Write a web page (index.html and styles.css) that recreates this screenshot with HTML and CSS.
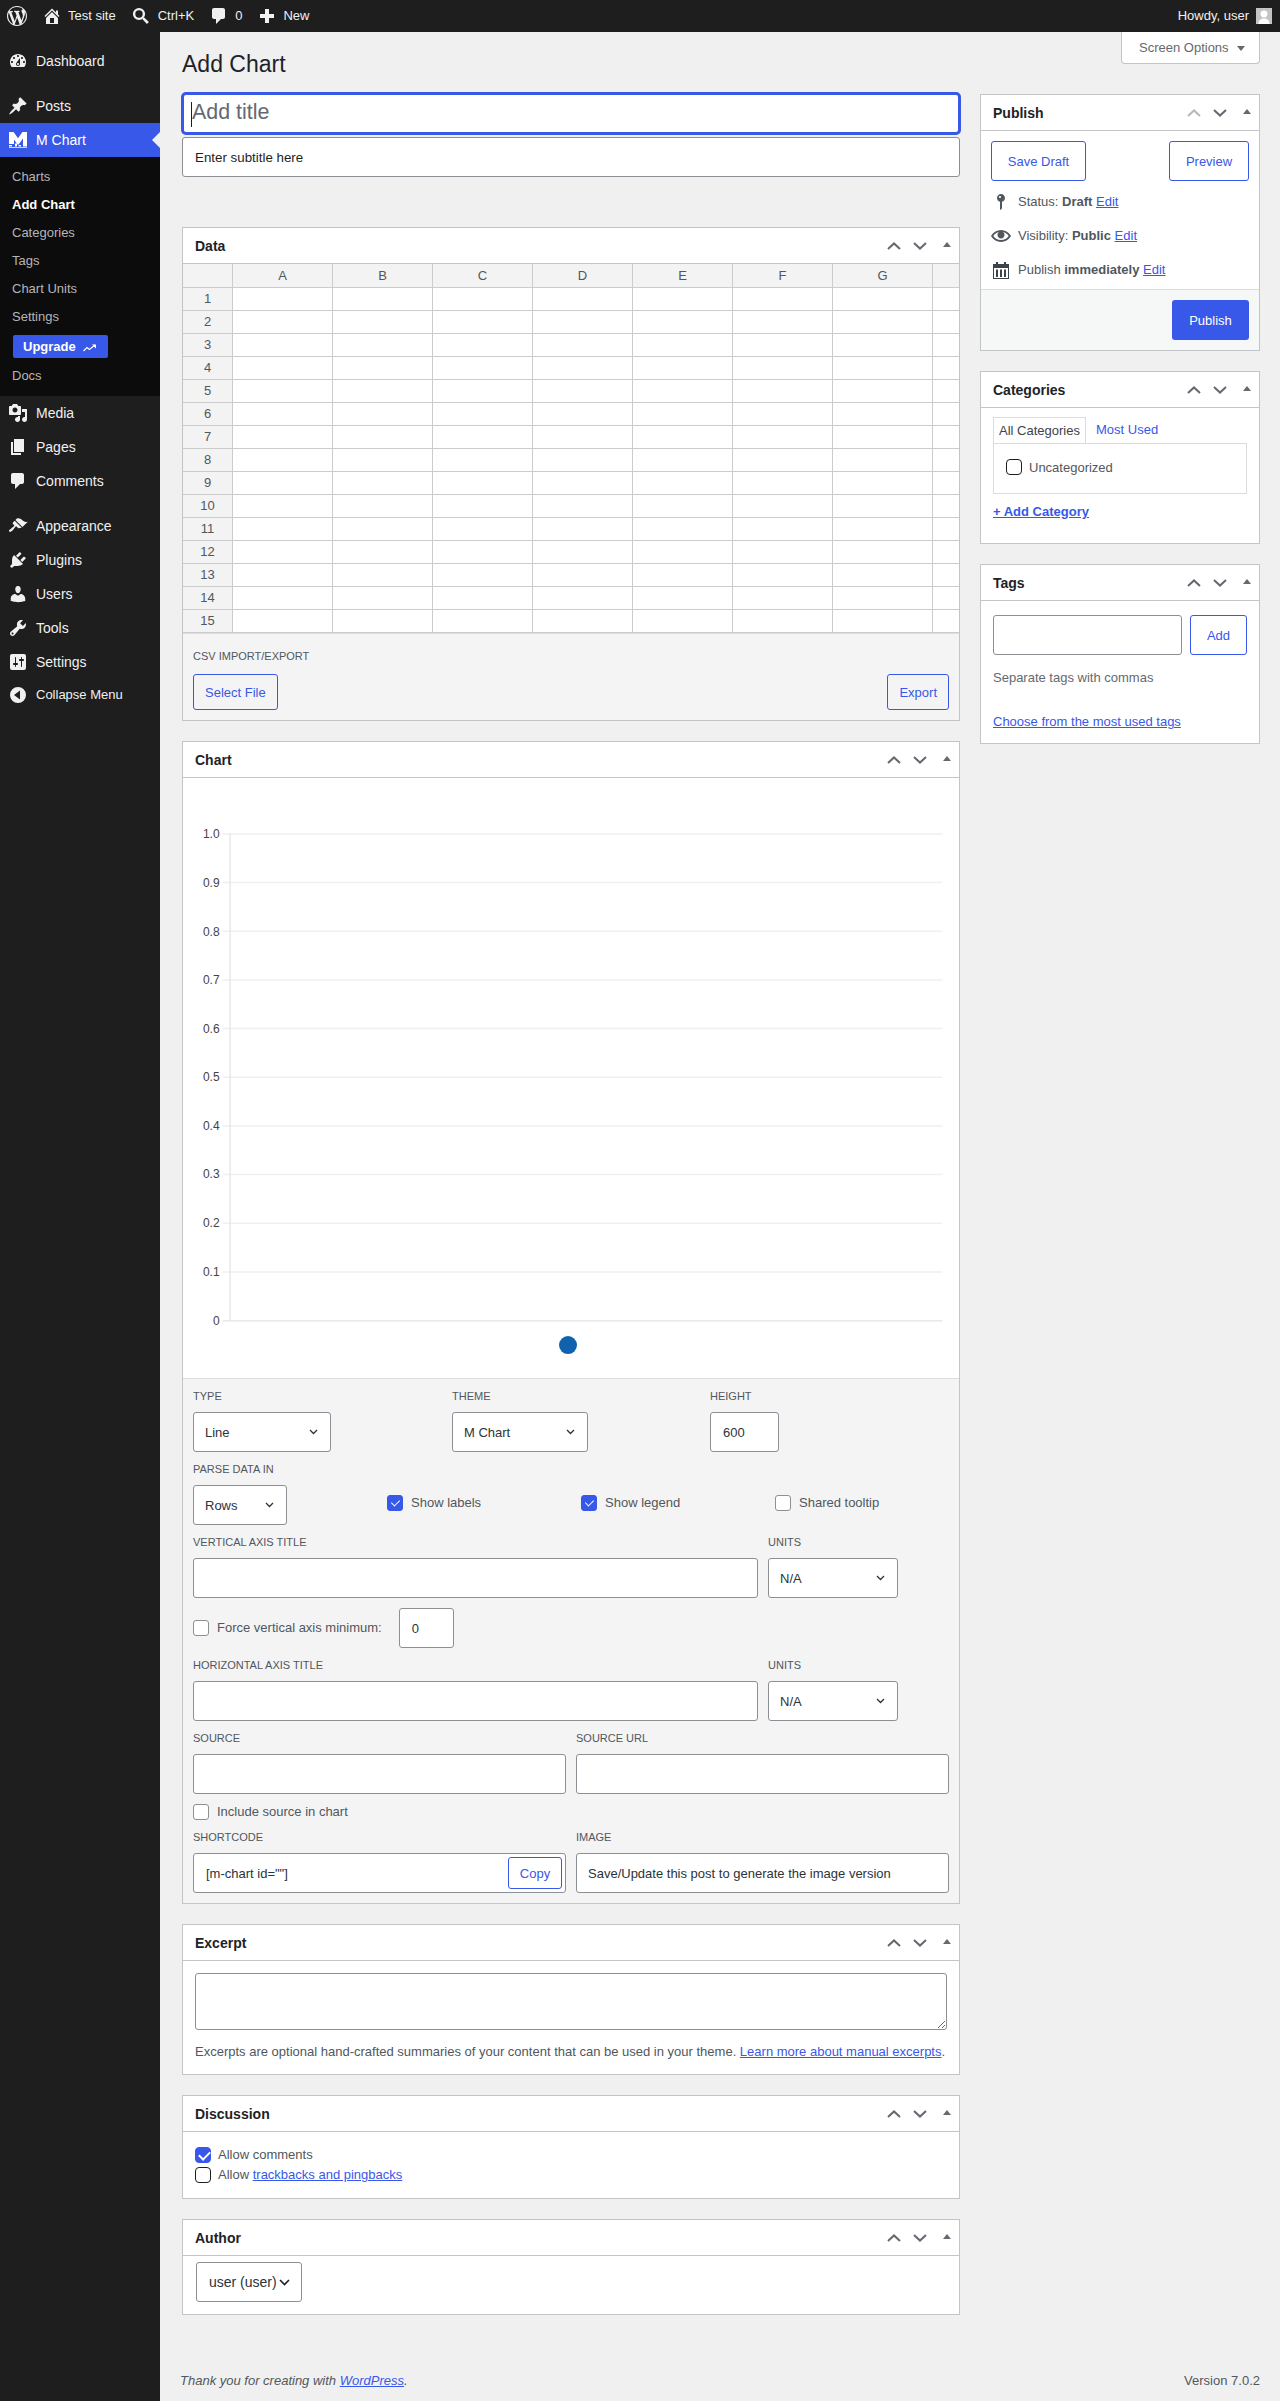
FILE: index.html
```html
<!DOCTYPE html>
<html lang="en">
<head>
<meta charset="utf-8">
<title>Add Chart</title>
<link rel="stylesheet" href="styles.css">
</head>
<body>
<svg class="defs" aria-hidden="true">
  <symbol id="i-wp" viewBox="0 0 20 20"><path d="M20 10c0-5.51-4.49-10-10-10C4.48 0 0 4.49 0 10c0 5.52 4.48 10 10 10 5.51 0 10-4.48 10-10zM7.78 15.37L4.37 6.22c.55-.02 1.17-.08 1.17-.08.5-.06.44-1.13-.06-1.11 0 0-1.45.11-2.37.11-.18 0-.37 0-.58-.01C4.12 2.69 6.87 1.11 10 1.11c2.33 0 4.45.87 6.05 2.34-.68-.11-1.65.39-1.65 1.58 0 .74.45 1.36.9 2.1.35.61.55 1.36.55 2.46 0 1.49-1.4 5-1.4 5l-3.03-8.37c.54-.02.82-.17.82-.17.5-.05.44-1.25-.06-1.22 0 0-1.44.12-2.38.12-.87 0-2.33-.12-2.33-.12-.5-.03-.56 1.2-.06 1.22l.92.08 1.26 3.41zM17.41 10c.24-.64.74-1.87.43-4.25.7 1.29 1.05 2.71 1.05 4.25 0 3.29-1.73 6.24-4.4 7.78.97-2.59 1.94-5.2 2.92-7.78zM6.1 18.09C3.12 16.65 1.11 13.53 1.11 10c0-1.3.23-2.48.72-3.59C3.25 10.3 4.67 14.2 6.1 18.09zm4.03-6.63l2.58 6.98c-.86.29-1.76.45-2.71.45-.79 0-1.57-.11-2.29-.33.81-2.38 1.62-4.74 2.42-7.1z"/></symbol>
  <symbol id="i-home" viewBox="0 0 20 20"><path d="M16 8.5l1.53 1.53-1.06 1.06L10 4.62l-6.47 6.47-1.06-1.06L10 2.5l4 4v-2h2v4zm-6-2.46l6 5.99V18H4v-5.97zM12 17v-5H8v5h4z"/></symbol>
  <symbol id="i-search" viewBox="0 0 20 20"><circle cx="8" cy="8" r="4.9" fill="none" stroke="currentColor" stroke-width="2.4"/><path d="M11.3 12.9l1.6-1.6 5 4.7-2 2z"/></symbol>
  <symbol id="i-comment" viewBox="0 0 20 20"><path d="M5 2h9c1.1 0 2 .9 2 2v7c0 1.1-.9 2-2 2h-2l-5 5v-5H5c-1.1 0-2-.9-2-2V4c0-1.1.9-2 2-2z"/></symbol>
  <symbol id="i-plus" viewBox="0 0 20 20"><path d="M8 3h4v5h5v4h-5v5H8v-5H3V8h5z"/></symbol>
  <symbol id="i-dash" viewBox="0 0 20 20"><path d="M3.76 16h12.48c1.1-1.37 1.76-3.11 1.76-5 0-4.42-3.58-8-8-8s-8 3.58-8 8c0 1.89.66 3.63 1.76 5zM10 4c.55 0 1 .45 1 1s-.45 1-1 1-1-.45-1-1 .45-1 1-1zM6 6c.55 0 1 .45 1 1s-.45 1-1 1-1-.45-1-1 .45-1 1-1zm8 0c.55 0 1 .45 1 1s-.45 1-1 1-1-.45-1-1 .45-1 1-1zm-5.37 5.55L12 7v6c0 1.1-.9 2-2 2s-2-.9-2-2c0-.57.24-1.08.63-1.45zM4 10c.55 0 1 .45 1 1s-.45 1-1 1-1-.45-1-1 .45-1 1-1zm12 0c.55 0 1 .45 1 1s-.45 1-1 1-1-.45-1-1 .45-1 1-1zm-5 3c0-.55-.45-1-1-1s-1 .45-1 1 .45 1 1 1 1-.45 1-1z"/></symbol>
  <symbol id="i-pin" viewBox="0 0 20 20"><path d="M10.44 3.02l1.82-1.82 6.36 6.35-1.83 1.82c-1.05-.68-2.48-.57-3.41.36l-.75.75c-.92.93-1.04 2.35-.35 3.41l-1.83 1.82-2.41-2.41-2.8 2.79c-.42.42-3.38 2.71-3.8 2.29s1.86-3.39 2.28-3.81l2.79-2.79L4.1 9.36l1.83-1.82c1.05.69 2.48.57 3.4-.36l.75-.75c.93-.92 1.05-2.35.36-3.41z"/></symbol>
  <symbol id="i-media" viewBox="0 0 20 20"><path d="M13 11V4c0-.55-.45-1-1-1h-1.67L9 1H5L3.67 3H2c-.55 0-1 .45-1 1v7c0 .55.45 1 1 1h10c.55 0 1-.45 1-1zM7 4.5c1.38 0 2.5 1.12 2.5 2.5S8.38 9.5 7 9.5 4.5 8.38 4.5 7 5.62 4.5 7 4.5zM14 6h5v10.5c0 1.38-1.12 2.5-2.5 2.5S14 17.88 14 16.5s1.12-2.5 2.5-2.5c.17 0 .34.02.5.05V9h-3V6zm-4 8.05V13h2v3.5c0 1.38-1.12 2.5-2.5 2.5S7 17.88 7 16.5 8.12 14 9.5 14c.17 0 .34.02.5.05z"/></symbol>
  <symbol id="i-page" viewBox="0 0 20 20"><path d="M6 15V2h10v13H6zm-1 1h8v2H3V5h2v11z"/></symbol>
  <symbol id="i-brush" viewBox="0 0 20 20"><path d="M14.48 11.06L7.41 3.99l1.5-1.5c.5-.56 2.3-.47 3.51.32 1.21.8 1.43 1.28 2.91 2.1 1.18.64 2.45 1.26 4.45.85zm-.71.71L6.7 4.7 4.93 6.47c-.39.39-.39 1.02 0 1.41l1.06 1.06c.39.39.39 1.03 0 1.42-.6.6-1.43 1.11-2.21 1.69-.35.26-.7.53-1.01.84C1.43 13.23.4 14.75 1.25 15.6c.85.85 2.37-.18 3.71-1.52.31-.31.58-.66.84-1.01.58-.78 1.09-1.61 1.69-2.21.39-.39 1.03-.39 1.42 0l1.06 1.06c.39.39 1.02.39 1.41 0z"/></symbol>
  <symbol id="i-plugin" viewBox="0 0 20 20"><path d="M13.11 4.36L9.87 7.6 8 5.73l3.24-3.24c.35-.34 1.05-.2 1.56.32.52.51.66 1.21.31 1.55zm-8 1.77l.91-1.12 9.01 9.01-1.19.84c-.71.71-2.63 1.16-3.82 1.16H6.14L4.9 17.26c-.59.59-1.54.59-2.12 0-.59-.58-.59-1.53 0-2.12l1.24-1.24v-3.88c0-1.13.4-3.19 1.09-3.89zm7.26 3.97l3.24-3.24c.34-.35 1.04-.21 1.55.31.52.51.66 1.21.31 1.55l-3.24 3.25z"/></symbol>
  <symbol id="i-user" viewBox="0 0 20 20"><path d="M10 9.25c-2.27 0-2.73-3.44-2.73-3.44C7 4.02 7.82 2 9.97 2c2.16 0 2.98 2.02 2.71 3.81 0 0-.41 3.44-2.68 3.44zm0 2.57L12.72 10c2.39 0 4.52 2.33 4.52 4.53v2.49s-3.65 1.13-7.24 1.13c-3.65 0-7.24-1.13-7.24-1.13v-2.49c0-2.25 1.94-4.48 4.47-4.48z"/></symbol>
  <symbol id="i-tool" viewBox="0 0 20 20"><path d="M16.68 9.77c-1.34 1.34-3.3 1.67-4.95.99l-5.41 6.52c-.99.99-2.59.99-3.58 0s-.99-2.59 0-3.57l6.52-5.42c-.68-1.65-.35-3.61.99-4.95 1.28-1.28 3.12-1.62 4.72-1.06l-2.89 2.89 2.82 2.82 2.86-2.87c.53 1.58.18 3.39-1.08 4.65zM3.81 16.21c.4.39 1.04.39 1.43 0 .4-.4.4-1.04 0-1.43-.39-.4-1.03-.4-1.43 0-.39.39-.39 1.03 0 1.43z"/></symbol>
  <symbol id="i-settings" viewBox="0 0 20 20"><path d="M18 16V4c0-1.1-.9-2-2-2H4c-1.1 0-2 .9-2 2v12c0 1.1.9 2 2 2h12c1.1 0 2-.9 2-2zM8 11h1c.55 0 1 .45 1 1s-.45 1-1 1H8v1.5c0 .28-.22.5-.5.5s-.5-.22-.5-.5V13H6c-.55 0-1-.45-1-1s.45-1 1-1h1V5.5c0-.28.22-.5.5-.5s.5.22.5.5V11zm5-2h-1c-.55 0-1-.45-1-1s.45-1 1-1h1V5.5c0-.28.22-.5.5-.5s.5.22.5.5V7h1c.55 0 1 .45 1 1s-.45 1-1 1h-1v5.5c0 .28-.22.5-.5.5s-.5-.22-.5-.5V9z"/></symbol>
  <symbol id="i-collapse" viewBox="0 0 20 20"><path fill-rule="evenodd" d="M10 2a8 8 0 100 16 8 8 0 000-16zm2 3.5v9L6 10z"/></symbol>
  <symbol id="i-mchart" viewBox="0 0 18 16"><path d="M0 0h4.6L9 6.3 13.4 0H18v12h-4V6.5L9.6 12.4H8.4L5 7.5V12H0z"/><path d="M0 13h3v1.6H0zM6 11.5h2v3.1H6zM9.6 13h2.4v1.6H9.6zM14 9.5h4v5.1h-4zM0 15.2h18v.8H0z"/></symbol>
  <symbol id="i-trend" viewBox="0 0 14 8"><path d="M.5 7L4 3.6l2.4 1.8L12 1" fill="none" stroke="currentColor" stroke-width="1.2"/><path d="M9 .5h4v4z"/></symbol>
  <symbol id="i-status" viewBox="0 0 20 20"><path d="M14 6c0 1.86-1.28 3.41-3 3.86V16c0 1-2 2-2 2V9.86c-1.72-.45-3-2-3-3.86 0-2.21 1.79-4 4-4s4 1.79 4 4zM8 5c0 .55.45 1 1 1s1-.45 1-1-.45-1-1-1-1 .45-1 1z"/></symbol>
  <symbol id="i-eye" viewBox="0 0 20 20"><path d="M19.7 9.4C17.7 6 14 3.9 10 3.9S2.3 6 .3 9.4L0 10l.3.6c2 3.4 5.7 5.5 9.7 5.5s7.7-2.1 9.7-5.5l.3-.6-.3-.6zM10 14.1c-3.1 0-6-1.6-7.7-4.1C3.6 8 5.7 6.6 8 6.1c-.9.6-1.5 1.7-1.5 2.9 0 1.9 1.6 3.5 3.5 3.5s3.5-1.6 3.5-3.5c0-1.2-.6-2.3-1.5-2.9 2.3.5 4.4 1.9 5.7 3.9-1.7 2.5-4.6 4.1-7.7 4.1z"/></symbol>
  <symbol id="i-cal" viewBox="0 0 20 20"><path fill-rule="evenodd" d="M2 4h3V2h2v2h6V2h2v2h3v15H2zM3 8v10h14V8z"/><path d="M5 9.5h2V17H5zM9 9.5h2V17H9zM13 9.5h2V17h-2z"/></symbol>
  <symbol id="i-up" viewBox="0 0 14 8"><path d="M1 7l6-5.6L13 7" fill="none" stroke="currentColor" stroke-width="2"/></symbol>
  <symbol id="i-down" viewBox="0 0 14 8"><path d="M1 1l6 5.6L13 1" fill="none" stroke="currentColor" stroke-width="2"/></symbol>
  <symbol id="i-tri" viewBox="0 0 8 5"><path d="M4 0l4 5H0z"/></symbol>
  <symbol id="i-tri-down" viewBox="0 0 8 5"><path d="M4 5l4-5H0z"/></symbol>
</svg>

<header class="adminbar">
  <svg class="icon bar-logo"><use href="#i-wp"/></svg>
  <svg class="icon bar-home"><use href="#i-home"/></svg><span class="bar-text">Test site</span>
  <svg class="icon bar-search"><use href="#i-search"/></svg><span class="bar-text bar-text-ctrl">Ctrl+K</span>
  <svg class="icon bar-comment"><use href="#i-comment"/></svg><span class="bar-text">0</span>
  <svg class="icon bar-plus"><use href="#i-plus"/></svg><span class="bar-text">New</span>
  <span class="bar-howdy">Howdy, user</span>
  <svg class="avatar" viewBox="0 0 16 16"><rect width="16" height="16" fill="#c4c4c4"/><circle cx="8" cy="6" r="3.4" fill="#fff"/><path d="M2.5 16c0-4 2.5-5.5 5.5-5.5s5.5 1.5 5.5 5.5z" fill="#fff"/></svg>
</header>

<div class="app">
  <nav class="sidebar">
    <a class="menu-item"><svg class="icon"><use href="#i-dash"/></svg><span class="menu-dash">Dashboard</span></a>
    <a class="menu-item sep"><svg class="icon"><use href="#i-pin"/></svg><span>Posts</span></a>
    <a class="menu-item active"><svg class="icon-logo"><use href="#i-mchart"/></svg><span>M Chart</span></a>
    <div class="submenu">
      <a class="sub-item">Charts</a>
      <a class="sub-item current">Add Chart</a>
      <a class="sub-item">Categories</a>
      <a class="sub-item">Tags</a>
      <a class="sub-item">Chart Units</a>
      <a class="sub-item">Settings</a>
      <a class="upgrade">Upgrade<svg class="icon-trend"><use href="#i-trend"/></svg></a>
      <a class="sub-item">Docs</a>
    </div>
    <a class="menu-item"><svg class="icon"><use href="#i-media"/></svg><span>Media</span></a>
    <a class="menu-item"><svg class="icon"><use href="#i-page"/></svg><span>Pages</span></a>
    <a class="menu-item"><svg class="icon"><use href="#i-comment"/></svg><span>Comments</span></a>
    <a class="menu-item sep"><svg class="icon"><use href="#i-brush"/></svg><span>Appearance</span></a>
    <a class="menu-item"><svg class="icon"><use href="#i-plugin"/></svg><span>Plugins</span></a>
    <a class="menu-item"><svg class="icon"><use href="#i-user"/></svg><span>Users</span></a>
    <a class="menu-item"><svg class="icon"><use href="#i-tool"/></svg><span>Tools</span></a>
    <a class="menu-item"><svg class="icon"><use href="#i-settings"/></svg><span>Settings</span></a>
    <a class="menu-item collapse"><svg class="icon"><use href="#i-collapse"/></svg><span>Collapse Menu</span></a>
  </nav>

  <main class="content">
    <button class="screen-options" type="button">Screen Options<svg class="so-arrow"><use href="#i-tri-down"/></svg></button>
    <h1 class="page-title">Add Chart</h1>
    <div class="columns">
      <div class="col-main">
        <div class="title-wrap">
          <input class="title-input" type="text" placeholder="Add title">
          <span class="caret"></span>
        </div>
        <input class="subtitle-input" type="text" placeholder="Enter subtitle here">

        <section class="box box-data">
          <div class="box-head"><h2>Data</h2><svg class="h-up"><use href="#i-up"/></svg><svg class="h-down"><use href="#i-down"/></svg><svg class="h-tri"><use href="#i-tri"/></svg></div>
          <table class="grid">
            <colgroup><col class="c-n"><col class="c-d"><col class="c-d"><col class="c-d"><col class="c-d"><col class="c-d"><col class="c-d"><col class="c-d"><col></colgroup>
            <thead><tr><th></th><th>A</th><th>B</th><th>C</th><th>D</th><th>E</th><th>F</th><th>G</th><th></th></tr></thead>
            <tbody>
              <tr><th>1</th><td></td><td></td><td></td><td></td><td></td><td></td><td></td><td></td></tr>
              <tr><th>2</th><td></td><td></td><td></td><td></td><td></td><td></td><td></td><td></td></tr>
              <tr><th>3</th><td></td><td></td><td></td><td></td><td></td><td></td><td></td><td></td></tr>
              <tr><th>4</th><td></td><td></td><td></td><td></td><td></td><td></td><td></td><td></td></tr>
              <tr><th>5</th><td></td><td></td><td></td><td></td><td></td><td></td><td></td><td></td></tr>
              <tr><th>6</th><td></td><td></td><td></td><td></td><td></td><td></td><td></td><td></td></tr>
              <tr><th>7</th><td></td><td></td><td></td><td></td><td></td><td></td><td></td><td></td></tr>
              <tr><th>8</th><td></td><td></td><td></td><td></td><td></td><td></td><td></td><td></td></tr>
              <tr><th>9</th><td></td><td></td><td></td><td></td><td></td><td></td><td></td><td></td></tr>
              <tr><th>10</th><td></td><td></td><td></td><td></td><td></td><td></td><td></td><td></td></tr>
              <tr><th>11</th><td></td><td></td><td></td><td></td><td></td><td></td><td></td><td></td></tr>
              <tr><th>12</th><td></td><td></td><td></td><td></td><td></td><td></td><td></td><td></td></tr>
              <tr><th>13</th><td></td><td></td><td></td><td></td><td></td><td></td><td></td><td></td></tr>
              <tr><th>14</th><td></td><td></td><td></td><td></td><td></td><td></td><td></td><td></td></tr>
              <tr><th>15</th><td></td><td></td><td></td><td></td><td></td><td></td><td></td><td></td></tr>
            </tbody>
          </table>
          <div class="data-foot">
            <label class="cap">CSV IMPORT/EXPORT</label>
            <div class="data-actions"><button class="btn btn-36" type="button">Select File</button><button class="btn btn-36" type="button">Export</button></div>
          </div>
        </section>

        <section class="box">
          <div class="box-head"><h2>Chart</h2><svg class="h-up"><use href="#i-up"/></svg><svg class="h-down"><use href="#i-down"/></svg><svg class="h-tri"><use href="#i-tri"/></svg></div>
          <svg class="chart" viewBox="0 0 776 601">
            <g class="gridlines">
              <path d="M39 56H760M39 104.75H760M39 153.5H760M39 202.25H760M39 251H760M39 299.75H760M39 348.5H760M39 397.25H760M39 446H760M39 494.75H760"/>
            </g>
            <path class="axis" d="M46.5 56V544M39 543.75H760"/>
            <g class="ticks">
              <text x="36" y="60">1.0</text><text x="36" y="109">0.9</text><text x="36" y="158">0.8</text><text x="36" y="206">0.7</text><text x="36" y="255">0.6</text><text x="36" y="304">0.5</text><text x="36" y="353">0.4</text><text x="36" y="401">0.3</text><text x="36" y="450">0.2</text><text x="36" y="499">0.1</text><text x="36" y="548">0</text>
            </g>
            <circle class="legend-dot" cx="385" cy="568" r="9"/>
          </svg>
          <div class="settings">
            <div class="row r-type">
              <div><label class="cap">TYPE</label><select class="sel sel-type"><option>Line</option></select></div>
              <div><label class="cap">THEME</label><select class="sel sel-theme"><option>M Chart</option></select></div>
              <div><label class="cap">HEIGHT</label><input class="field field-height" type="text" value="600"></div>
            </div>
            <div class="row r-parse">
              <div><label class="cap">PARSE DATA IN</label><select class="sel sel-rows"><option>Rows</option></select></div>
              <label class="check"><input class="cb" type="checkbox" checked><span>Show labels</span></label>
              <label class="check"><input class="cb" type="checkbox" checked><span>Show legend</span></label>
              <label class="check"><input class="cb" type="checkbox"><span>Shared tooltip</span></label>
            </div>
            <div class="row r-axis">
              <div><label class="cap">VERTICAL AXIS TITLE</label><input class="field" type="text"></div>
              <div><label class="cap">UNITS</label><select class="sel sel-units"><option>N/A</option></select></div>
            </div>
            <div class="row r-force">
              <input class="cb" type="checkbox"><span class="force-label">Force vertical axis minimum:</span><input class="field field-min" type="text" value="0">
            </div>
            <div class="row r-axis">
              <div><label class="cap">HORIZONTAL AXIS TITLE</label><input class="field" type="text"></div>
              <div><label class="cap">UNITS</label><select class="sel sel-units"><option>N/A</option></select></div>
            </div>
            <div class="row r-two">
              <div><label class="cap">SOURCE</label><input class="field" type="text"></div>
              <div><label class="cap">SOURCE URL</label><input class="field" type="text"></div>
            </div>
            <label class="check r-include"><input class="cb" type="checkbox"><span>Include source in chart</span></label>
            <div class="row r-two r-last">
              <div><label class="cap">SHORTCODE</label>
                <div class="copy-wrap"><input class="field field-code" type="text" value='[m-chart id=""]'><button class="btn btn-copy" type="button">Copy</button></div>
              </div>
              <div><label class="cap">IMAGE</label><input class="field" type="text" value="Save/Update this post to generate the image version"></div>
            </div>
          </div>
        </section>

        <section class="box">
          <div class="box-head"><h2>Excerpt</h2><svg class="h-up"><use href="#i-up"/></svg><svg class="h-down"><use href="#i-down"/></svg><svg class="h-tri"><use href="#i-tri"/></svg></div>
          <div class="excerpt">
            <textarea class="excerpt-area"></textarea>
            <p class="excerpt-note">Excerpts are optional hand-crafted summaries of your content that can be used in your theme. <a class="link">Learn more about manual excerpts</a>.</p>
          </div>
        </section>

        <section class="box">
          <div class="box-head"><h2>Discussion</h2><svg class="h-up"><use href="#i-up"/></svg><svg class="h-down"><use href="#i-down"/></svg><svg class="h-tri"><use href="#i-tri"/></svg></div>
          <div class="discussion">
            <label class="check-d"><input class="cb cb-dark" type="checkbox" checked><span>Allow comments</span></label>
            <label class="check-d"><input class="cb cb-dark" type="checkbox"><span>Allow <a class="link">trackbacks and pingbacks</a></span></label>
          </div>
        </section>

        <section class="box">
          <div class="box-head"><h2>Author</h2><svg class="h-up"><use href="#i-up"/></svg><svg class="h-down"><use href="#i-down"/></svg><svg class="h-tri"><use href="#i-tri"/></svg></div>
          <div class="author"><select class="sel sel-author"><option>user (user)</option></select></div>
        </section>
      </div>

      <aside class="col-side">
        <section class="box">
          <div class="box-head"><h2>Publish</h2><svg class="h-up h-off"><use href="#i-up"/></svg><svg class="h-down"><use href="#i-down"/></svg><svg class="h-tri"><use href="#i-tri"/></svg></div>
          <div class="pub-actions"><button class="btn btn-40 btn-save" type="button">Save Draft</button><button class="btn btn-40 btn-preview" type="button">Preview</button></div>
          <div class="pub-row"><svg class="icon pub-icon"><use href="#i-status"/></svg><span>Status: <b>Draft</b> <a class="link">Edit</a></span></div>
          <div class="pub-row"><svg class="icon pub-icon"><use href="#i-eye"/></svg><span>Visibility: <b>Public</b> <a class="link">Edit</a></span></div>
          <div class="pub-row"><svg class="icon pub-icon-dark"><use href="#i-cal"/></svg><span>Publish <b>immediately</b> <a class="link">Edit</a></span></div>
          <div class="pub-foot"><button class="btn-primary" type="button">Publish</button></div>
        </section>

        <section class="box">
          <div class="box-head"><h2>Categories</h2><svg class="h-up"><use href="#i-up"/></svg><svg class="h-down"><use href="#i-down"/></svg><svg class="h-tri"><use href="#i-tri"/></svg></div>
          <div class="cats">
            <div class="tabs"><span class="tab tab-on">All Categories</span><a class="tab-link">Most Used</a></div>
            <div class="tab-panel"><label class="check-cat"><input class="cb cb-dark" type="checkbox"><span>Uncategorized</span></label></div>
            <a class="add-cat">+ Add Category</a>
          </div>
        </section>

        <section class="box">
          <div class="box-head"><h2>Tags</h2><svg class="h-up"><use href="#i-up"/></svg><svg class="h-down"><use href="#i-down"/></svg><svg class="h-tri"><use href="#i-tri"/></svg></div>
          <div class="tags">
            <div class="tag-row"><input class="field tag-input" type="text"><button class="btn btn-40 btn-add" type="button">Add</button></div>
            <p class="tag-hint">Separate tags with commas</p>
            <a class="link tag-link">Choose from the most used tags</a>
          </div>
        </section>
      </aside>
    </div>
    <footer class="page-foot"><em>Thank you for creating with <a class="link">WordPress</a>.</em><span>Version 7.0.2</span></footer>
  </main>
</div>
</body>
</html>
```

FILE: styles.css
```css
* { box-sizing: border-box; }
html, body { margin: 0; padding: 0; }
body { font: 13px/20px "Liberation Sans", Arial, sans-serif; color: #3c434a; background: #f0f0f0; }
input, select, textarea, button { font-family: inherit; margin: 0; }
.defs { position: absolute; width: 0; height: 0; }
.icon { width: 20px; height: 20px; fill: currentColor; flex: none; }

.adminbar { height: 32px; background: #1e1e1e; color: #f0f0f1; display: flex; align-items: center; padding: 0 8px 0 7px; }
.bar-text { margin-left: 6px; }
.bar-text-ctrl { margin-left: 7px; }
.bar-home { margin-left: 15px; }
.bar-search { margin-left: 15px; }
.bar-comment { margin-left: 15px; }
.bar-plus { margin-left: 15px; }
.bar-howdy { margin-left: auto; }
.avatar { width: 16px; height: 16px; margin-left: 7px; flex: none; }

.app { display: flex; align-items: stretch; }
.sidebar { width: 160px; flex: none; background: #1e1e1e; color: #f0f0f1; padding-top: 12px; }
.menu-item { position: relative; display: flex; align-items: center; height: 34px; padding-left: 8px; gap: 8px; }
.menu-dash { font-size: 14px; }
.menu-item span { font-size: 14px; }
.sep { margin-top: 11px; }
.active { background: #3858e9; color: #fff; }
.active::after { content: ""; position: absolute; right: 0; top: 9px; border: 8px solid transparent; border-right-color: #f0f0f0; border-left-width: 0; }
.icon-logo { width: 18px; height: 16px; fill: #fff; margin: 0 1px; flex: none; }
.submenu { background: #0c0c0c; padding: 6px 0 6px; }
.sub-item { display: block; height: 28px; line-height: 28px; padding-left: 12px; color: #b6b6b6; }
.current { color: #fff; font-weight: 700; }
.upgrade { display: flex; align-items: center; width: 95px; height: 23px; margin: 4px 0 4px 13px; padding-left: 10px; background: #3858e9; border-radius: 2px; color: #fff; font-weight: 700; line-height: 20px; }
.icon-trend { width: 14px; height: 8px; margin-left: 7px; fill: #fff; color: #fff; margin-top: 3px; }
.collapse { height: 32px; }
.collapse span { font-size: 13px; }

.content { flex: 1; min-width: 0; padding: 0 20px 10px 22px; }
.screen-options { float: right; width: 139px; height: 32px; padding: 0 0 0 17px; display: flex; align-items: center; color: #646970; background: #fff; border: 1px solid #c3c4c7; border-top: 0; border-radius: 0 0 4px 4px; font-size: 13px; }
.so-arrow { width: 8px; height: 5px; fill: #646970; margin-left: 8px; margin-top: 2px; }
.page-title { margin: 0; padding-top: 17px; height: 61px; font-size: 23px; line-height: 30px; font-weight: 400; color: #1d2327; }

.columns { display: flex; gap: 20px; align-items: flex-start; }
.col-main { width: 778px; flex: none; }
.col-side { width: 280px; flex: none; padding-top: 1px; }
.col-side .box { margin-bottom: 20px; }
.col-side .box:last-child { margin-bottom: 0; }

.title-wrap { position: relative; }
.title-input { display: block; width: 100%; height: 41px; padding: 0 8px 2px; border: 2px solid #3858e9; border-radius: 4px; box-shadow: 0 0 0 1px #3858e9; font-size: 21.4px; color: #1e1e1e; background: #fff; outline: 0; }
.title-input::placeholder { color: #646970; opacity: 1; }
.caret { position: absolute; left: 9px; top: 9px; width: 1px; height: 25px; background: #1e1e1e; }
.subtitle-input { display: block; width: 100%; height: 40px; margin: 3px 0 50px; padding: 0 12px; background: #fff; border: 1px solid #8c8f94; border-radius: 3px; font-size: 13.33px; }
.subtitle-input::placeholder { color: #1e1e1e; opacity: 1; }

.box { background: #fff; border: 1px solid #c3c4c7; margin-bottom: 20px; }
.col-main .box:last-child { margin-bottom: 0; }
.box-head { display: flex; align-items: center; height: 36px; padding: 0 8px 0 12px; border-bottom: 1px solid #c3c4c7; }
.box-head h2 { margin: 0 auto 0 0; font-size: 14px; line-height: 20px; font-weight: 700; color: #1d2327; }
.h-up, .h-down { width: 14px; height: 8px; color: #646970; }
.h-up { margin-right: 12px; }
.h-down { margin-right: 16px; }
.h-off { color: #b5b7ba; }
.h-tri { width: 8px; height: 5px; fill: #646970; margin-top: -2px; }

.grid { table-layout: fixed; width: 776px; border-collapse: separate; border-spacing: 0; }
.c-n { width: 50px; }
.c-d { width: 100px; }
.grid th, .grid td { height: 23px; padding: 0; border-right: 1px solid #ccc; border-bottom: 1px solid #ccc; font-weight: 400; color: #50575e; text-align: center; line-height: 16px; }
.grid thead th { height: 24px; background: #f3f3f3; }
.grid tbody th { background: #f3f3f3; }
.grid td { background: #fff; }
.grid tr > :last-child { border-right: 0; }
.data-foot { background: #f4f4f4; padding: 14px 10px 10px; border-top: 1px solid #ddd; }
.cap { display: block; font-size: 11px; line-height: 16px; color: #50575e; margin-bottom: 8px; }
.data-foot .cap { margin-bottom: 10px; }
.data-actions { display: flex; justify-content: space-between; }
.btn { font-size: 13px; color: #3858e9; background: transparent; border: 1px solid #3858e9; border-radius: 3px; padding: 0 11px; }
.btn-36 { height: 36px; }
.btn-40 { height: 40px; background: #fff; }

.chart { display: block; width: 776px; height: 601px; border-bottom: 1px solid #ddd; background: #fff; }
.gridlines path { stroke: #f0f0f0; stroke-width: 1.5; fill: none; }
.axis { stroke: #e3e3e3; stroke-width: 1.2; fill: none; }
.ticks text { font-size: 12px; fill: #444; text-anchor: end; }
.legend-dot { fill: #0f62ab; }

.settings { background: #f4f4f4; padding: 9px 10px 10px; }
.row { display: grid; margin-bottom: 9px; }
.r-type { grid-template-columns: 259px 258px 1fr; }
.r-parse { grid-template-columns: repeat(4, 194px); }
.r-axis { grid-template-columns: 565px 130px; column-gap: 10px; }
.r-two { grid-template-columns: 373px 373px; column-gap: 10px; }
.r-last { margin-bottom: 0; }
.sel { display: block; height: 40px; padding: 0 24px 0 11px; font-size: 13px; color: #2c3338; border: 1px solid #8c8f94; border-radius: 3px; appearance: none; background: #fff url("data:image/svg+xml,%3Csvg xmlns='http://www.w3.org/2000/svg' width='9' height='6' viewBox='0 0 9 6'%3E%3Cpath d='M1 1l3.5 3.5L8 1' fill='none' stroke='%232c3338' stroke-width='1.3'/%3E%3C/svg%3E") no-repeat right 12px center; }
.sel-type { width: 138px; }
.sel-theme { width: 136px; }
.sel-rows { width: 94px; }
.sel-units { width: 130px; }
.field { display: block; width: 100%; height: 40px; padding: 0 11px; font-size: 13px; color: #2c3338; background: #fff; border: 1px solid #8c8f94; border-radius: 3px; }
.field-height { width: 69px; padding-left: 12px; }
.check { display: flex; align-items: center; gap: 8px; color: #50575e; align-self: end; margin-bottom: 12px; height: 20px; }
.cb { appearance: none; display: block; width: 16px; height: 16px; margin: 0; flex: none; background: #fff; border: 1px solid #8c8f94; border-radius: 3px; }
.cb:checked { background: #3858e9; border-color: #3858e9; }
.cb:checked::before { content: ""; display: block; width: 4px; height: 7px; margin: 2px 0 0 5px; border: solid #fff; border-width: 0 1px 1px 0; transform: rotate(45deg); }
.cb-dark { border-color: #1e1e1e; border-radius: 4px; }
.cb-dark:checked::before { width: 5px; height: 9px; margin: 1px 0 0 4.5px; border-width: 0 2px 2px 0; }
.r-force { display: flex; align-items: center; height: 40px; margin-top: 10px; }
.force-label { margin-left: 8px; color: #50575e; }
.field-min { width: 55px; margin-left: 17px; padding-left: 12px; }
.r-include { margin: 10px 0 9px; height: 16px; }
.copy-wrap { position: relative; }
.field-code { padding-left: 12px; }
.btn-copy { position: absolute; right: 4px; top: 4px; height: 32px; width: 54px; padding: 0; background: #fff; }

.excerpt { padding: 12px 12px 12px; }
.excerpt-area { display: block; width: 752px; height: 57px; border: 1px solid #8c8f94; border-radius: 3px; background: #fff; }
.excerpt-note { margin: 12px 0 0; color: #50575e; }
.link { color: #3858e9; text-decoration: underline; }

.discussion { padding: 13px 12px 13px; }
.check-d { display: flex; align-items: center; gap: 7px; height: 20px; color: #50575e; }
.author { padding: 6px 13px 12px; }
.sel-author { width: 106px; font-size: 14px; padding-left: 12px; padding-right: 0; background-image: url("data:image/svg+xml,%3Csvg xmlns='http://www.w3.org/2000/svg' width='11' height='7' viewBox='0 0 11 7'%3E%3Cpath d='M1 1l4.5 4.5L10 1' fill='none' stroke='%231e1e1e' stroke-width='1.6'/%3E%3C/svg%3E"); background-position: right 11px center; }

.pub-actions { display: flex; justify-content: space-between; padding: 10px 10px 4px; }
.btn-save { width: 95px; }
.btn-preview { width: 80px; }
.pub-row { display: flex; align-items: center; height: 34px; padding-left: 10px; color: #50575e; }
.pub-icon { color: #50575e; margin-right: 7px; }
.pub-icon-dark { width: 20px; height: 20px; fill: #3c434a; margin-right: 7px; flex: none; }
.pub-foot { display: flex; justify-content: flex-end; margin-top: 2px; padding: 10px; background: #f6f7f7; border-top: 1px solid #dcdcde; }
.btn-primary { width: 77px; height: 40px; background: #3858e9; color: #fff; border: 0; border-radius: 3px; font-size: 13px; }

.cats { padding: 9px 12px 21px; }
.tabs { display: flex; align-items: flex-end; height: 26px; }
.tab { display: block; width: 93px; height: 26px; padding: 3px 0 0 5px; background: #fff; border: 1px solid #dcdcde; border-bottom: 0; }
.tab-link { margin: 0 0 3px 10px; color: #3858e9; }
.tab-panel { height: 51px; padding: 15px 0 0 12px; border: 1px solid #dcdcde; }
.check-cat { display: flex; align-items: center; gap: 7px; height: 16px; color: #50575e; }
.check-cat span { margin-top: 2px; }
.add-cat { display: block; margin-top: 8px; font-weight: 700; color: #3858e9; text-decoration: underline; }

.tags { padding: 14px 12px 11px; }
.tag-row { display: flex; justify-content: space-between; }
.tag-input { width: 189px; }
.btn-add { width: 57px; padding: 0; }
.tag-hint { margin: 13px 0 24px; color: #646970; }
.tag-link { display: block; }

.page-foot { display: flex; justify-content: space-between; margin: 56px 0 0 -2px; color: #50575e; }
```
